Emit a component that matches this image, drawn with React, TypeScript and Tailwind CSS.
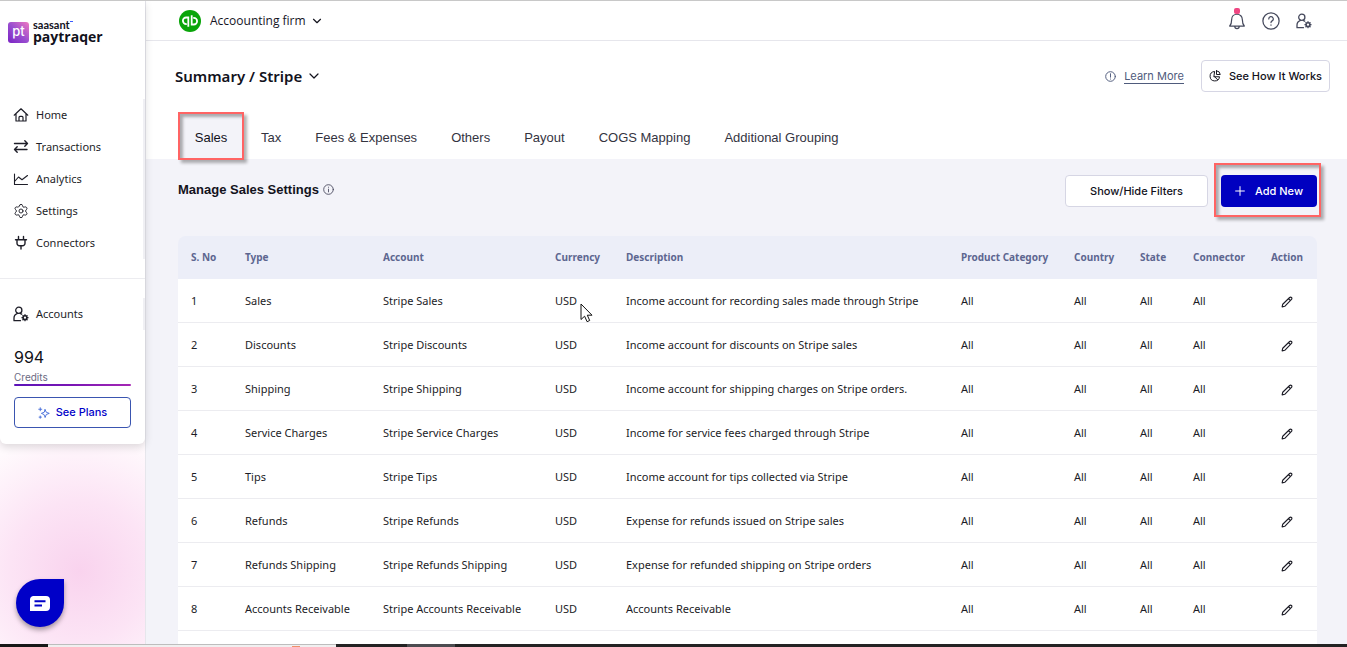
import type { ReactNode } from 'react';
import { ChevronDown, Settings } from 'lucide-react';

const ROWS = [
  { type: 'Sales', account: 'Stripe Sales', description: 'Income account for recording sales made through Stripe' },
  { type: 'Discounts', account: 'Stripe Discounts', description: 'Income account for discounts on Stripe sales' },
  { type: 'Shipping', account: 'Stripe Shipping', description: 'Income account for shipping charges on Stripe orders.' },
  { type: 'Service Charges', account: 'Stripe Service Charges', description: 'Income for service fees charged through Stripe' },
  { type: 'Tips', account: 'Stripe Tips', description: 'Income account for tips collected via Stripe' },
  { type: 'Refunds', account: 'Stripe Refunds', description: 'Expense for refunds issued on Stripe sales' },
  { type: 'Refunds Shipping', account: 'Stripe Refunds Shipping', description: 'Expense for refunded shipping on Stripe orders' },
  { type: 'Accounts Receivable', account: 'Stripe Accounts Receivable', description: 'Accounts Receivable' },
];

const COLUMNS = [
  { label: 'S. No', width: 'w-[54px]' },
  { label: 'Type', width: 'w-[138px]' },
  { label: 'Account', width: 'w-[172px]' },
  { label: 'Currency', width: 'w-[71px]' },
  { label: 'Description', width: '' },
  { label: 'Product Category', width: 'w-[113px]' },
  { label: 'Country', width: 'w-[66px]' },
  { label: 'State', width: 'w-[53px]' },
  { label: 'Connector', width: 'w-[77px]' },
];

const TABS = ['Sales', 'Tax', 'Fees & Expenses', 'Others', 'Payout', 'COGS Mapping', 'Additional Grouping'];

function Icon({ size = 16, stroke = 1.2, className = '', children }: { size?: number; stroke?: number; className?: string; children: ReactNode }) {
  return (
    <svg
      width={size}
      height={size}
      viewBox="0 0 16 16"
      fill="none"
      stroke="currentColor"
      strokeWidth={stroke}
      strokeLinecap="round"
      strokeLinejoin="round"
      className={`shrink-0 ${className}`}
      aria-hidden="true"
    >
      {children}
    </svg>
  );
}

const HomeIcon = () => (
  <Icon>
    <path d="M1.2 8.2 8 1.8l6.800 6.400M3 7v7h10V7M6 14v-3.600a1 1 0 0 1 1-1h2a1 1 0 0 1 1 1V14" />
  </Icon>
);

const TransferIcon = () => (
  <Icon stroke={1.4}>
    <path d="M1.500 4.500h13M11.800 1.800l2.700 2.700-2.700 2.700M14 10.500H1.500M4.200 7.800l-2.700 2.700 2.700 2.700" />
  </Icon>
);

const ChartIcon = () => (
  <Icon stroke={1.1}>
    <path d="M1.500 3v10.500h13M2 10 5.500 6l3.500 2.800L14.500 4.500" />
  </Icon>
);

const PlugIcon = () => (
  <Icon stroke={1.4}>
    <path d="M5.500 1.500v3M10.500 1.500v3M2.500 4.700h11M4 4.700v3.500a2.500 2.500 0 0 0 2.500 2.500h3A2.500 2.500 0 0 0 12 8.200V4.700M8 10.700v3.300" />
  </Icon>
);

const UserGearIcon = () => (
  <Icon stroke={1.3}>
    <circle cx="5.800" cy="4.300" r="3.100" />
    <path d="M7.500 14.700H1v-2.600C1 9.700 2.600 8 4.500 7.300M7.500 7.600l1.200.6" />
    <circle cx="12" cy="11.700" r="1.900" strokeWidth="1.500" />
    <path d="M12 8.700v.7M12 14v.7M9 11.700h.7M14.300 11.700h.7M9.900 9.600l.5.500M13.600 13.300l.5.500M9.900 13.800l.5-.5M13.600 10.100l.5-.5" />
  </Icon>
);

const NAV = [
  { label: 'Home', icon: <HomeIcon /> },
  { label: 'Transactions', icon: <TransferIcon /> },
  { label: 'Analytics', icon: <ChartIcon /> },
  { label: 'Settings', icon: <Settings size={16} strokeWidth={1.4} /> },
  { label: 'Connectors', icon: <PlugIcon /> },
];

function Logo() {
  return (
    <div className="flex items-center gap-1 pl-2">
      <svg width="21" height="21" viewBox="0 0 21 21" className="shrink-0" aria-hidden="true">
        <defs>
          <linearGradient id="logo" x1="0" y1="1" x2="1" y2="0">
            <stop offset="0" stopColor="#7a22c4" />
            <stop offset="0.500" stopColor="#9a4fd0" />
            <stop offset="1" stopColor="#f07ac0" />
          </linearGradient>
        </defs>
        <rect width="21" height="21" rx="3" fill="url(#logo)" />
        <text x="10.500" y="14" textAnchor="middle" fontFamily="Inter, sans-serif" fontSize="13" fontWeight="500" fill="#fff">pt</text>
      </svg>
      <div className="text-[#12121c]">
        <div className="flex font-['Lato',sans-serif] text-[11px] leading-[9px] font-bold">
          saasant
          <span className="mt-px h-px w-[3px] bg-[#3b5bff]" />
        </div>
        <div className="font-['Open_Sans',sans-serif] text-sm leading-4 font-bold">paytraqer</div>
      </div>
    </div>
  );
}

function Sidebar() {
  return (
    <aside className="relative flex w-[146px] shrink-0 flex-col border-r border-[#e6e6ec] bg-[radial-gradient(circle_140px_at_80px_570px,#f9d3ee_0%,#fce4f5_50%,#fffafd_100%)]">
      <div className="rounded-b-md bg-white shadow-[0_3px_8px_rgba(0,0,0,0.14)]">
        <div className="pt-[19px]"><Logo /></div>
        <nav className="mt-[54px] border-r-2 border-[#f0f0f4]">
          {NAV.map(item => (
            <a key={item.label} href="#" className="flex h-8 items-center gap-[7px] pl-[13px] text-[11px] text-[#1e1e28]">
              {item.icon}
              {item.label}
            </a>
          ))}
        </nav>
        <div className="mt-[19px] border-t border-[#ececf0] pt-[19px]">
          <a href="#" className="flex h-8 items-center gap-[7px] border-r-2 border-[#f0f0f4] pl-[13px] text-[11px] text-[#1e1e28]">
            <UserGearIcon />
            Accounts
          </a>
        </div>
        <div className="px-3.5 pt-[17px] pb-4 font-['Inter',sans-serif]">
          <div className="text-base leading-5 text-[#111118]">994</div>
          <div className="mt-1 text-[10px] leading-3 text-[#6a6a82]">Credits</div>
          <div className="mt-px h-0.5 rounded bg-linear-to-r from-[#5a12b8] via-[#7a14b4] to-[#a626b4]" />
          <button className="mt-[11px] flex h-[31px] w-full items-center justify-center gap-1.5 rounded border border-[#3a55b0] text-[11px] font-medium text-[#0000c8]">
            <Icon size={12} className="text-[#4169d8]">
              <path d="M9.500 3.500 11 7l4 1.500L11 10l-1.500 4L8 10 4.500 8.500 8 7ZM3 1v4M1 3h4M3 12v3M1.500 13.500h3" />
            </Icon>
            See Plans
          </button>
        </div>
      </div>
      <button aria-label="Open chat" className="absolute bottom-[17px] left-4 flex size-12 items-center justify-center rounded-full rounded-tr-md bg-[#0000c8] shadow-[0_3px_5px_rgba(0,0,0,0.35)]">
        <svg width="20" height="15" viewBox="0 0 20 15" aria-hidden="true">
          <path d="M3 0h13a4 4 0 0 1 4 4v7a4 4 0 0 1-4 4H0V4a4 4 0 0 1 3-4Z" fill="#fff" />
          <path d="M4.500 5.200h11M4.500 9.500H12" stroke="#0000c8" strokeWidth="2" />
        </svg>
      </button>
    </aside>
  );
}

function TopBar() {
  return (
    <header className="flex h-10 shrink-0 items-center justify-between border-b border-[#e6e6ec] pr-[35px] pl-[33px]">
      <button className="flex items-center font-['Open_Sans',sans-serif] text-xs text-[#15151f]">
        <svg width="22" height="22" viewBox="0 0 22 22" aria-hidden="true">
          <circle cx="11" cy="11" r="11" fill="#0aa50a" />
          <g fill="none" stroke="#fff" strokeWidth="1.800">
            <path d="M9.300 7.500H7.200a3.300 3.300 0 0 0 0 6.600h.6M9.300 6.600v10.100" />
            <path d="M12.700 14.500h2.100a3.300 3.300 0 0 0 0-6.600h-.6M12.700 15.400V5.300" />
          </g>
        </svg>
        <span className="ml-[9px]">Accoounting firm</span>
        <ChevronDown size={14} className="ml-1" />
      </button>
      <div className="flex items-center gap-4 text-[#45495c]">
        <button aria-label="Notifications" className="relative">
          <Icon size={18} stroke={1.100}>
            <path d="M1.500 12.500h13c-1.300-1.300-1.700-2.500-1.700-5.500C12.800 4 10.700 2 8 2S3.200 4 3.200 7c0 3-.4 4.200-1.700 5.500ZM6 12.700a2 2 0 0 0 4 0" />
          </Icon>
          <span className="absolute -top-1 left-1.5 size-1.5 rounded-xs bg-[#ef4682]" />
        </button>
        <button aria-label="Help">
          <Icon size={18} stroke={1.100}>
            <circle cx="8" cy="8" r="7.200" />
            <path d="M6 6.200a2 2 0 1 1 3 1.700c-.7.400-1 .8-1 1.500M8 11.500v.2" />
          </Icon>
        </button>
        <button aria-label="Account settings"><UserGearIcon /></button>
      </div>
    </header>
  );
}

// Red outline that calls attention to the element it is placed in
function Highlight({ className }: { className: string }) {
  return (
    <span className={`pointer-events-none absolute border-2 border-[#ff6464] shadow-[3px_3px_3px_rgba(0,0,0,0.3),inset_3px_3px_3px_rgba(0,0,0,0.3)] ${className}`} />
  );
}

function SettingsTable() {
  return (
    <table className="mt-[29px] w-full table-fixed border-separate border-spacing-0 text-left">
      <thead>
        <tr className="h-[43px] text-[10px] text-[#5d6690]">
          {COLUMNS.map(col => (
            <th key={col.label} className={`bg-[#eceef8] pl-[13px] font-bold whitespace-nowrap first:rounded-tl-lg ${col.width}`}>{col.label}</th>
          ))}
          <th className="w-[60px] rounded-tr-lg bg-[#eceef8] text-center font-bold">Action</th>
        </tr>
      </thead>
      <tbody className="bg-white text-[11px] text-[#1c1c26] [&_td]:border-b [&_td]:border-[#ececf0] [&_td]:pt-0.5 [&_td]:pl-[13px] [&_td]:whitespace-nowrap">
        {ROWS.map((row, i) => (
          <tr key={row.type} className="h-11">
            <td>{i + 1}</td>
            <td>{row.type}</td>
            <td>{row.account}</td>
            <td className="relative">
              USD
              {i === 0 && (
                <svg width="13" height="20" viewBox="0 0 13 20" className="absolute top-6 left-[38px]" aria-hidden="true">
                  <path d="M1 1v15.500l3.600-3.300 2.500 5.500 2.600-1.200-2.400-5.300H12Z" fill="#fff" stroke="#111" />
                </svg>
              )}
            </td>
            <td>{row.description}</td>
            <td>All</td>
            <td>All</td>
            <td>All</td>
            <td>All</td>
            <td>
              <button aria-label={`Edit ${row.type}`} className="ml-[11px] block">
                <Icon size={12} stroke={1.500}>
                  <path d="M1.500 14.500l.8-3.500L11.500 2a1.600 1.600 0 0 1 2.500 2.500L5 13.700ZM10 3.500l2.500 2.500" />
                </Icon>
              </button>
            </td>
          </tr>
        ))}
        <tr className="h-11">
          <td colSpan={10} />
        </tr>
      </tbody>
    </table>
  );
}

function Taskbar() {
  return (
    <footer className="flex h-[3px] shrink-0 bg-[#232323]">
      <div className="w-12 bg-[#171717]" />
      <div className="w-[288px] border-t border-[#bdbdbd] bg-[#f0f0f0] pt-px pl-[244px]">
        <div className="h-px w-2 bg-[#f0906a]" />
      </div>
      <div className="ml-[71px] w-12 bg-[#4c4c50]" />
    </footer>
  );
}

export default function App() {
  return (
    <div className="flex h-screen flex-col overflow-hidden border-t border-[#c8c8c8] bg-white font-['Noto_Sans',sans-serif]">
      <div className="flex min-h-0 flex-1">
        <Sidebar />
        <main className="flex min-w-0 flex-1 flex-col overflow-hidden">
          <TopBar />
          <div className="flex items-center justify-between pt-[19px] pr-[17px] pl-[29px]">
            <h1>
              <button className="flex items-center gap-1 text-[15px] font-semibold text-[#12121c]">
                Summary / Stripe
                <ChevronDown size={16} strokeWidth={1.8} />
              </button>
            </h1>
            <div className="flex items-center gap-[17px] font-['Inter',sans-serif] text-[11px]">
              <a href="#" className="flex items-center gap-2 text-[#4f5b7c]">
                <Icon size={11} stroke={1.400}>
                  <circle cx="8" cy="8" r="7" />
                  <path d="M8 4v5M8 11.600v.2" />
                </Icon>
                <span className="border-b border-[#4f5b7c] leading-[14px]">Learn More</span>
              </a>
              <button className="flex h-8 items-center gap-2 rounded border border-[#d6d6e4] px-[7px] font-medium text-[#12121c]">
                <Icon size={12} stroke={1.300}>
                  <path d="M7 2a6.300 6.300 0 1 0 7 7H7ZM10 1v5h5A5.500 5.500 0 0 0 10 1ZM7.500 9l4 4" />
                </Icon>
                See How It Works
              </button>
            </div>
          </div>
          <div role="tablist" className="mt-[21px] flex pl-8 font-['Liberation_Sans',sans-serif] text-[13px] text-[#34343f]">
            {TABS.map((tab, i) => (
              <button
                key={tab}
                role="tab"
                aria-selected={i === 0}
                className={i === 0 ? 'relative h-[46px] w-[66px] bg-[#f3f3f9] pt-1 text-[#12121c]' : 'h-[46px] px-[17px] pt-1'}
              >
                {tab}
                {i === 0 && <Highlight className="-inset-y-px inset-x-0" />}
              </button>
            ))}
          </div>
          <section className="flex-1 bg-[#f3f3f9] pt-4 pr-[30px] pl-8">
            <div className="flex items-start justify-between">
              <h2 className="flex items-center gap-1 pt-[5px] font-['Liberation_Sans',sans-serif] text-[13px] font-bold text-[#12121c]">
                Manage Sales Settings
                <Icon size={11} stroke={1.300} className="text-[#4a4a60]">
                  <circle cx="8" cy="8" r="7" />
                  <path d="M8 7.500v4M8 4.600v.2" />
                </Icon>
              </h2>
              <div className="flex gap-[13px] font-['Inter',sans-serif] text-[11px] font-medium">
                <button className="h-8 rounded border border-[#d6d6e4] bg-white px-6 text-[#12121c]">Show/Hide Filters</button>
                <button className="relative flex h-8 items-center gap-2.5 rounded bg-[#0000c0] px-3.5 text-white">
                  <Icon size={10} stroke={1.600}>
                    <path d="M8 1v14M1 8h14" />
                  </Icon>
                  Add New
                  <Highlight className="-top-3 -right-1 -bottom-2.5 -left-[7px]" />
                </button>
              </div>
            </div>
            <SettingsTable />
          </section>
        </main>
      </div>
      <Taskbar />
    </div>
  );
}
